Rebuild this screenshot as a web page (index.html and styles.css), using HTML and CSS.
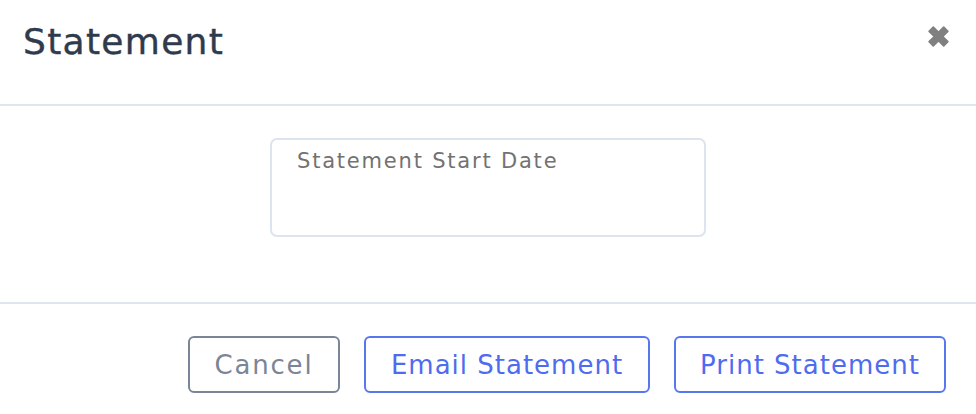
FILE: index.html
```html
<!DOCTYPE html>
<html lang="en">
<head>
<meta charset="utf-8">
<title>Statement</title>
<link rel="stylesheet" href="styles.css">
</head>
<body>
<div class="modal">
  <header class="modal-header">
    <h1 class="modal-title">Statement</h1>
    <button class="close" aria-label="Close">
      <svg viewBox="0 0 24 24" width="25" height="25"><path d="M3 7 L7 3 L12 8 L17 3 L21 7 L16 12 L21 17 L17 21 L12 16 L7 21 L3 17 L8 12 Z" fill="#808080" stroke="#808080" stroke-width="1.6" stroke-linejoin="round"/></svg>
    </button>
  </header>
  <section class="modal-body">
    <div class="field">
      <label class="field-label">Statement Start Date</label>
    </div>
  </section>
  <footer class="modal-footer">
    <button class="btn btn-secondary">Cancel</button>
    <button class="btn btn-primary btn-email">Email Statement</button>
    <button class="btn btn-primary btn-print">Print Statement</button>
  </footer>
</div>
</body>
</html>
```
FILE: styles.css
```css
* { box-sizing: border-box; }
html, body { margin: 0; padding: 0; background: #fff; }
body { font-family: "DejaVu Sans", "Open Sans", sans-serif; }
.modal { width: 976px; }
.modal-header {
  height: 106px;
  display: flex;
  align-items: flex-start;
  justify-content: space-between;
  padding: 19px 25px 0 23px;
  border-bottom: 2px solid #dde6f0;
}
.modal-title {
  margin: 0;
  font-size: 36px;
  font-weight: 400;
  letter-spacing: 1.3px;
  color: #2f3b4d;
  line-height: 46px;
  -webkit-text-stroke: 0.4px #2f3b4d;
}
.close {
  border: 0;
  background: none;
  padding: 0;
  margin-top: 5px;
  width: 25px;
  height: 25px;
  cursor: pointer;
}
.close svg { display: block; }
.modal-body {
  height: 198px;
  padding-top: 32px;
  display: flex;
  justify-content: center;
  border-bottom: 2px solid #dde6f0;
}
.field {
  width: 436px;
  height: 99px;
  border: 2px solid #dbe4ef;
  border-radius: 7px;
  padding: 6px 25px;
}
.field-label {
  font-size: 21px;
  letter-spacing: 1.8px;
  color: #727272;
  line-height: 30px;
}
.modal-footer {
  display: flex;
  justify-content: flex-end;
  gap: 24px;
  padding: 32px 30px 0 0;
}
.btn {
  height: 57px;
  border: 2px solid;
  border-radius: 6px;
  background: #fff;
  font-family: inherit;
  font-size: 26px;
  font-weight: 400;
  letter-spacing: 1px;
  padding: 0;
  cursor: pointer;
}
.btn-secondary { border-color: #7a8597; color: #7a8597; width: 152px; letter-spacing: 1.8px; }
.btn-primary { border-color: #5677f0; color: #4f6cf0; }
.btn-email { width: 286px; }
.btn-print { width: 272px; }
```
